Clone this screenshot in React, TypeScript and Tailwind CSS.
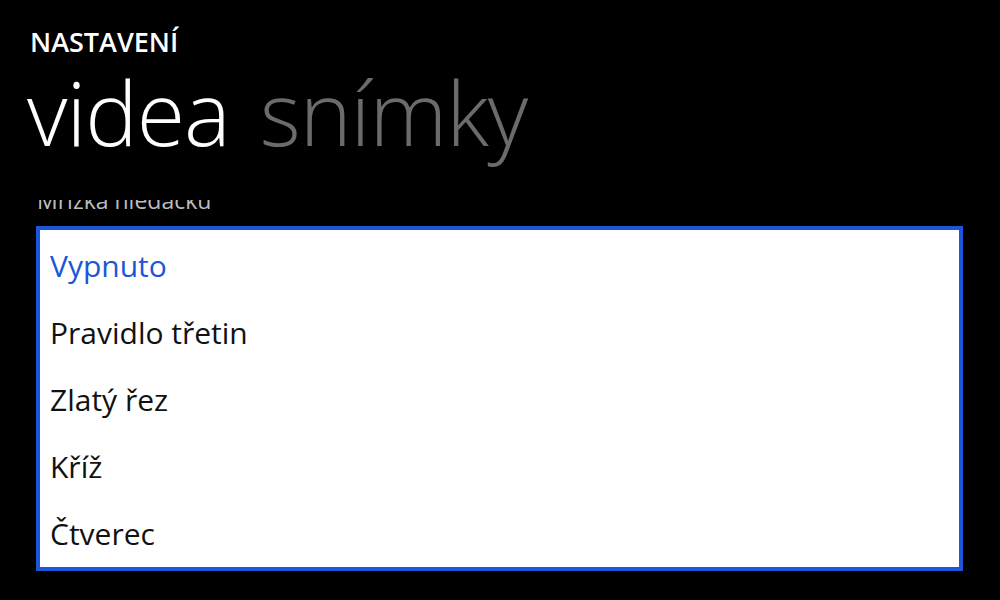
import React from 'react';

const options = ['Vypnuto', 'Pravidlo třetin', 'Zlatý řez', 'Kříž', 'Čtverec'];

export default function App() {
  const selected = 0;

  return (
    <div className="w-[1000px] h-[600px] bg-black overflow-hidden font-['Open_Sans',sans-serif] text-white">
      {/* header */}
      <div className="h-[200px] pl-[30px] pt-[26px]">
        <div className="text-[27px] font-semibold leading-[32px]">NASTAVENÍ</div>
        <div className="flex gap-[30px] -ml-[3px] mt-[1px] text-[88px] font-light leading-[106px] tracking-[-1px]">
          <span>videa</span>
          <span className="text-[#6b6b6b]">snímky</span>
        </div>
      </div>

      {/* scrolled content, clipped under header */}
      <div className="h-[400px] overflow-hidden">
        <div className="-mt-[16px] pl-[37px] text-[23px] leading-[32px] text-[#bdbdbd]">Mřížka hledáčku</div>
        <div className="mt-[10px] ml-[36px] w-[927px] h-[345px] border-4 border-[#1c56d8] bg-white pt-[2px]">
          {options.map((opt, i) => (
            <div
              key={opt}
              className={
                i === selected
                  ? 'h-[67px] pl-[10px] flex items-center text-[30px] text-[#1c56d8]'
                  : 'h-[67px] pl-[10px] flex items-center text-[30px] text-[#111]'
              }
            >
              {opt}
            </div>
          ))}
        </div>
      </div>
    </div>
  );
}
